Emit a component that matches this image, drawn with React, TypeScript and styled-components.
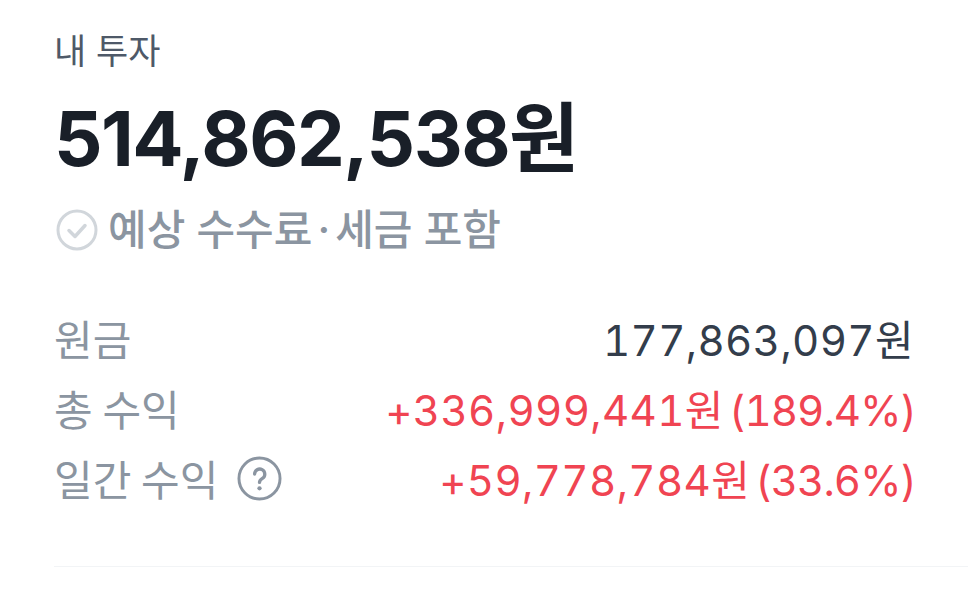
import React from 'react';
import styled, { createGlobalStyle } from 'styled-components';

const GlobalStyle = createGlobalStyle`
  html, body {
    margin: 0;
    padding: 0;
    background: #ffffff;
    font-family: Inter, "Noto Sans CJK KR", sans-serif;
  }
`;

const Page = styled.div`
  width: 968px;
  height: 597px;
  overflow: hidden;
  padding: 28px 0 0 54px;
  box-sizing: border-box;
`;

const Label = styled.div`
  font-size: 35px;
  line-height: 46px;
  font-weight: 400;
  color: #4e5968;
`;

const Total = styled.div`
  margin-top: 18px;
  font-size: 76px;
  line-height: 92px;
  font-weight: 700;
  color: #191f28;
  letter-spacing: -1.55px;
`;

const Notice = styled.div`
  margin-top: 21px;
  display: flex;
  align-items: center;
  gap: 10px;
  font-size: 42px;
  line-height: 50px;
  font-weight: 500;
  color: #8b95a1;

  svg {
    margin-left: 2px;
  }
`;

const Dot = styled.span`
  margin: 0 5px;
`;

const Rows = styled.div`
  margin-top: 58px;
  padding-right: 54px;
  display: flex;
  flex-direction: column;
  gap: 22px;
`;

const Row = styled.div`
  display: flex;
  justify-content: space-between;
  align-items: center;
  height: 48px;
  font-size: 42px;
`;

const RowLabel = styled.div`
  display: flex;
  align-items: center;
  gap: 19px;
  color: #8b95a1;
  font-weight: 400;
  word-spacing: -2px;

  svg {
    margin-top: 3px;
  }
`;

const RowValue = styled.div<{ $up?: boolean }>`
  display: flex;
  align-items: baseline;
  gap: 5px;
  color: ${p => (p.$up ? '#f04452' : '#333d4b')};
  font-variant-numeric: tabular-nums;
  letter-spacing: 0.4px;
`;

const Rate = styled.span`
  letter-spacing: -0.9px;
  margin-right: -2px;
`;

const Divider = styled.div`
  margin-top: 65px;
  height: 1px;
  background: #f2f4f6;
`;

export default function App() {
  return (
    <Page>
      <GlobalStyle />
      <Label>내 투자</Label>
      <Total>514,862,538원</Total>
      <Notice>
        <svg width="42" height="42" viewBox="0 0 42 42" fill="none">
          <circle cx="21" cy="21" r="19" stroke="#d1d6db" strokeWidth="3" />
          <path d="M13 21.5l6 6 10-11" stroke="#d1d6db" strokeWidth="3.5" strokeLinecap="round" strokeLinejoin="round" />
        </svg>
        <span>예상 수수료<Dot>·</Dot>세금 포함</span>
      </Notice>
      <Rows>
        <Row>
          <RowLabel>원금</RowLabel>
          <RowValue>177,863,097원</RowValue>
        </Row>
        <Row>
          <RowLabel>총 수익</RowLabel>
          <RowValue $up>+336,999,441원<Rate>(189.4%)</Rate></RowValue>
        </Row>
        <Row>
          <RowLabel>
            일간 수익
            <svg width="45" height="45" viewBox="0 0 46 46" fill="none">
              <circle cx="23" cy="23" r="21" stroke="#8b95a1" strokeWidth="3" />
              <path d="M18 18.5a5.2 5.2 0 1 1 8 4.4c-2 1.3-3 2.2-3 4.1" stroke="#8b95a1" strokeWidth="3.4" strokeLinecap="round" />
              <circle cx="23" cy="33" r="2.2" fill="#8b95a1" />
            </svg>
          </RowLabel>
          <RowValue $up>+59,778,784원<Rate>(33.6%)</Rate></RowValue>
        </Row>
      </Rows>
      <Divider />
    </Page>
  );
}
